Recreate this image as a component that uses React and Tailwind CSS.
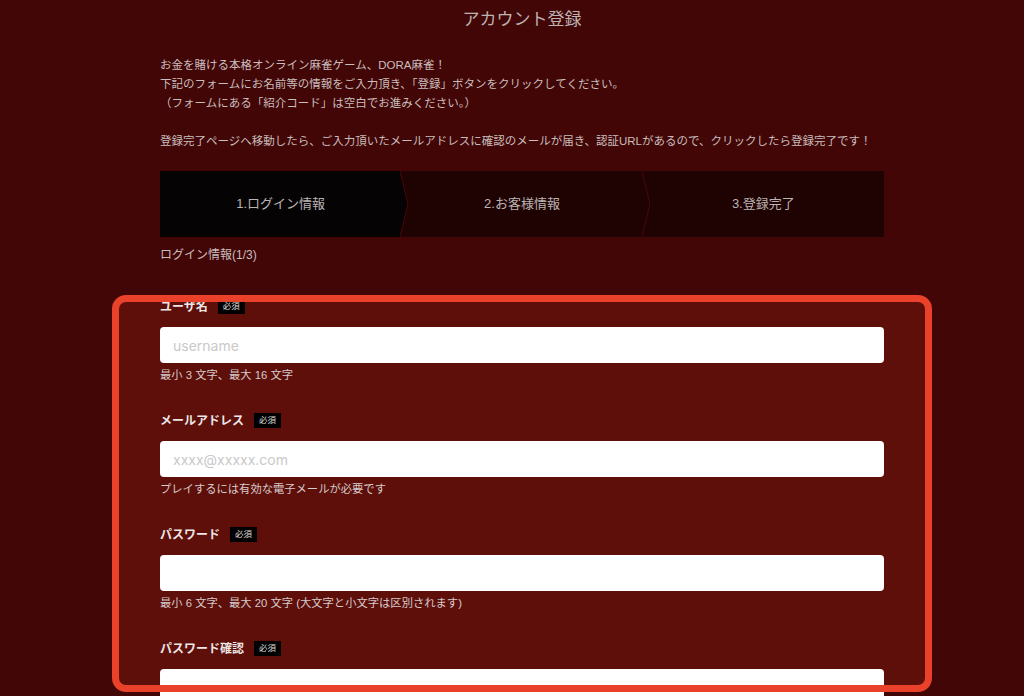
import React from 'react';

const fields = [
  { label: 'ユーザ名', placeholder: 'username', help: '最小 3 文字、最大 16 文字', type: 'text' },
  { label: 'メールアドレス', placeholder: 'xxxx@xxxxx.com', help: 'プレイするには有効な電子メールが必要です', type: 'email' },
  { label: 'パスワード', placeholder: '', help: '最小 6 文字、最大 20 文字 (大文字と小文字は区別されます)', type: 'password' },
  { label: 'パスワード確認', placeholder: '', help: '', type: 'password' },
];

const steps = ['1.ログイン情報', '2.お客様情報', '3.登録完了'];

function Chevron({ fill }) {
  // arrow tip on the right edge of a step
  return (
    <svg className="absolute top-0 right-[-8px] z-10 h-[66px] w-[9px]" viewBox="0 0 9 66" preserveAspectRatio="none">
      {fill && <polygon points="0,0 8,33 0,66" fill={fill} />}
      <polyline points="0,0 8,33 0,66" fill="none" stroke="#4d0707" strokeWidth="1" />
    </svg>
  );
}

export default function App() {
  return (
    <div className="min-h-screen w-full bg-[#420606] text-[#c9bdbd] font-['Liberation_Sans','Noto_Sans_CJK_JP',sans-serif] overflow-hidden">
      <div className="ml-[160px] w-[724px]">
        <h1 className="flex h-[36px] items-center justify-center text-[17px] text-[#bdb3b3] font-['Noto_Sans_CJK_JP',sans-serif]">
          アカウント登録
        </h1>

        <div className="mt-[20px] text-[11.5px] leading-[19px]">
          <p>お金を賭ける本格オンライン麻雀ゲーム、DORA麻雀！</p>
          <p>下記のフォームにお名前等の情報をご入力頂き、「登録」ボタンをクリックしてください。</p>
          <p>（フォームにある「紹介コード」は空白でお進みください。）</p>
          <p className="mt-[19px]">
            登録完了ページへ移動したら、ご入力頂いたメールアドレスに確認のメールが届き、認証URLがあるので、クリックしたら登録完了です！
          </p>
        </div>

        <div className="mt-[20px] flex h-[66px] bg-[#1f0202] text-[13px] text-[#bcb4b4]">
          {steps.map((s, i) => (
            <div
              key={s}
              className={`relative flex flex-1 items-center justify-center ${i === 0 ? 'bg-[#050303]' : ''}`}
            >
              <span className="relative z-20">{s}</span>
              {i === 0 && <Chevron fill="#050303" />}
              {i === 1 && <Chevron />}
            </div>
          ))}
        </div>

        <p className="mt-[9px] text-[12px] leading-[19px] text-[#c9bdbd]">ログイン情報(1/3)</p>

        <div className="relative mt-[30px]">
          {/* highlighted area */}
          <div className="absolute left-[-41px] right-[-41px] top-[7px] h-[384px] bg-[#5e0f0a]" />
          <div className="relative pt-[1px]">
            {fields.map((f) => (
              <div key={f.label} className="mb-[27px]">
                <div className="flex h-[20px] items-center">
                  <span className="text-[12px] font-semibold text-[#ece6e6] font-['Noto_Sans_CJK_JP',sans-serif]">{f.label}</span>
                  <span className="ml-[10px] flex h-[15px] items-center bg-black px-[5px] text-[8.5px] text-[#ddd]">必須</span>
                </div>
                <input
                  type={f.type}
                  placeholder={f.placeholder}
                  className="mt-[11px] block h-[36px] w-full rounded-[4px] bg-white pl-[13px] text-[14px] text-[#333] outline-none font-['Inter',sans-serif] placeholder:text-[#c9c9c9]"
                />
                <p className="mt-[4px] h-[16px] text-[11.3px] leading-[16px] text-[#d6caca]">{f.help}</p>
              </div>
            ))}
          </div>
          {/* annotation frame */}
          <div className="pointer-events-none absolute left-[-48px] right-[-48px] top-0 h-[397px] rounded-[14px] border-[7px] border-[#e9412a]" />
        </div>
      </div>
    </div>
  );
}
